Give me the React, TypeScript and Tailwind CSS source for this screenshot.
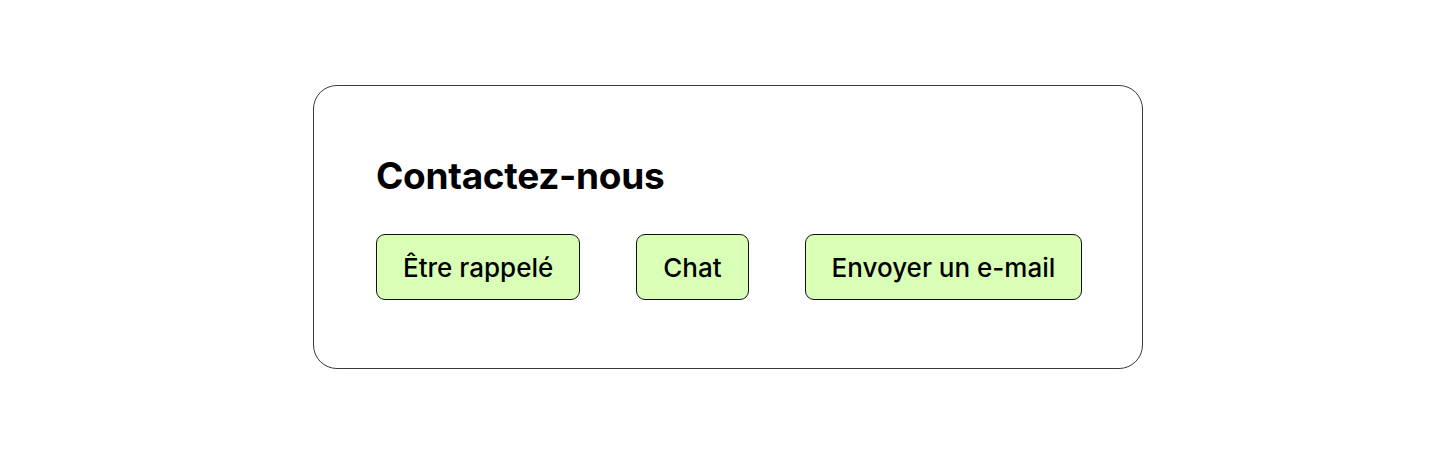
const actions = ['Être rappelé', 'Chat', 'Envoyer un e-mail']

export default function App() {
  return (
    <div
      className="flex min-h-[454px] w-full items-center justify-center bg-white"
      style={{ fontFamily: 'Inter, "Liberation Sans", sans-serif' }}
    >
      <div className="w-[830px] rounded-[24px] border-[1.5px] border-[#3a3a3a] px-[62px] pt-[68px] pb-[68px]">
        <h2 className="text-[37px] font-bold leading-[44px] tracking-[-0.3px] text-black">Contactez-nous</h2>
        <div className="mt-[36px] flex gap-[56px]">
          {actions.map((label) => (
            <button
              key={label}
              type="button"
              className="h-[66px] shrink-0 whitespace-nowrap rounded-[9px] border-[1.5px] border-[#111] bg-[#d9ffb7] px-[26px] text-[26px] font-medium text-black"
            >
              {label}
            </button>
          ))}
        </div>
      </div>
    </div>
  )
}
